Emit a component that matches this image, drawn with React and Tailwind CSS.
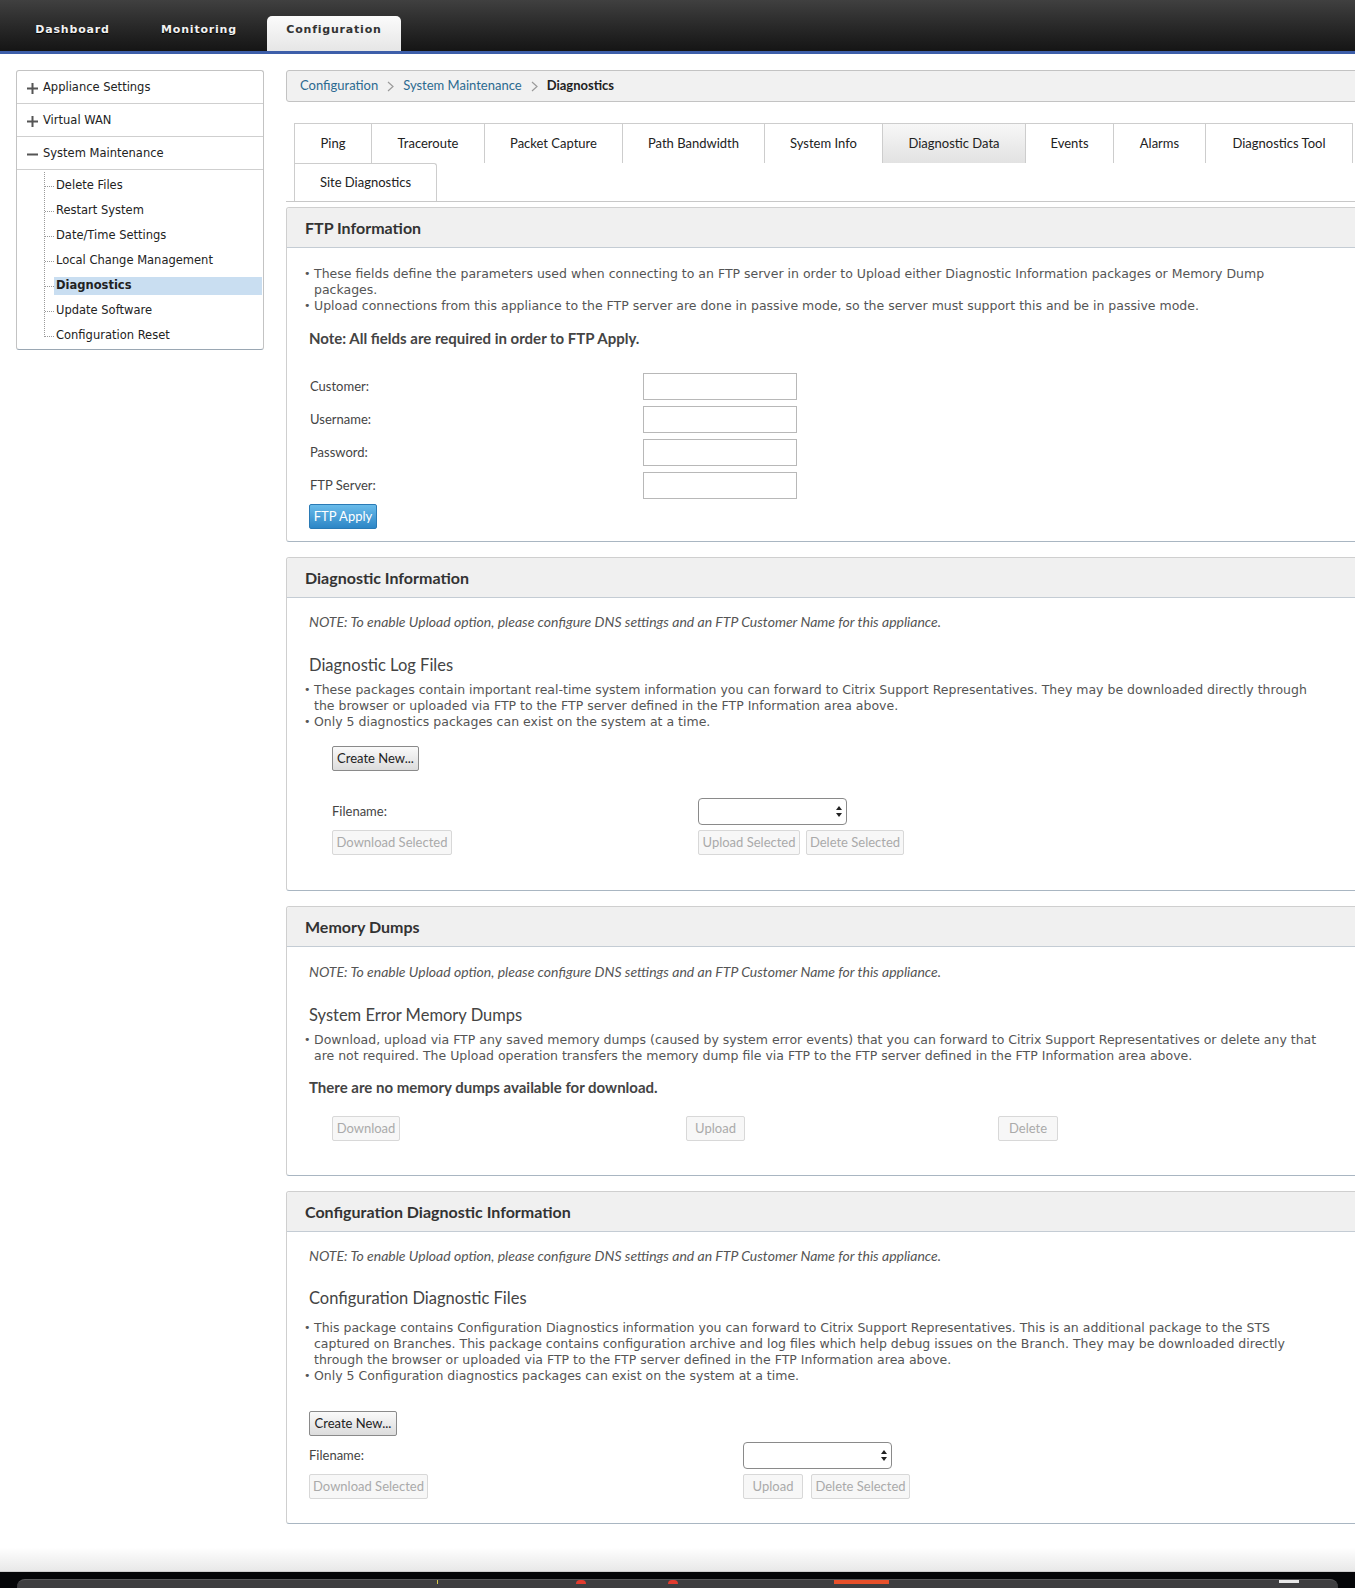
import React from 'react'

const lucida = { fontFamily: '"DejaVu Sans", "Noto Sans", sans-serif' }
const myriad = { fontFamily: 'Lato, "Open Sans", sans-serif' }

const topTabs = ['Dashboard', 'Monitoring']

const tabs = [
  ['Ping', 'w-[77px]'],
  ['Traceroute', 'w-[113px]'],
  ['Packet Capture', 'w-[138px]'],
  ['Path Bandwidth', 'w-[142px]'],
  ['System Info', 'w-[118px]'],
  ['Diagnostic Data', 'w-[143px]', true],
  ['Events', 'w-[88px]'],
  ['Alarms', 'w-[92px]'],
  ['Diagnostics Tool', 'w-[148px]'],
]

const subItems = [
  'Delete Files',
  'Restart System',
  'Date/Time Settings',
  'Local Change Management',
  'Diagnostics',
  'Update Software',
  'Configuration Reset',
]

const NOTE =
  'NOTE: To enable Upload option, please configure DNS settings and an FTP Customer Name for this appliance.'

function Plus({ minus }) {
  return (
    <svg width="11" height="11" viewBox="0 0 11 11" className="mr-[5px]">
      <rect x="0" y="4.5" width="11" height="2" fill="#555" />
      {!minus && <rect x="4.5" y="0" width="2" height="11" fill="#555" />}
    </svg>
  )
}

function Panel({ title, children }) {
  return (
    <div className="rounded-[3px] border border-[#cfcfcf] border-b-[#a9b6c2] bg-white">
      <div
        className="h-[40px] flex items-center pl-[18px] bg-[#f0f0f0] border-b border-[#c4ccd4] text-[16px] font-bold text-[#333] rounded-t-[3px]"
        style={myriad}
      >
        {title}
      </div>
      {children}
    </div>
  )
}

function Bullets({ items, className }) {
  return (
    <ul className={'pl-[17px] pr-[30px] text-[12.5px] leading-[16px] text-[#555] ' + (className || '')} style={lucida}>
      {items.map((t, i) => (
        <li key={i} className="flex">
          <span className="w-[10px] shrink-0 text-[11px]">•</span>
          <span>{t}</span>
        </li>
      ))}
    </ul>
  )
}

function Note({ className }) {
  return (
    <p className={'pl-[22px] text-[14px] leading-[16px] italic text-[#555] ' + (className || '')} style={myriad}>
      {NOTE}
    </p>
  )
}

function SubHead({ children, className }) {
  return (
    <h3 className={'pl-[22px] text-[16.5px] leading-[20px] text-[#444] ' + (className || '')} style={myriad}>
      {children}
    </h3>
  )
}

function Btn({ children, className, disabled }) {
  return (
    <button
      className={
        'h-[25px] px-[4px] rounded-[2px] border text-[13px] leading-none whitespace-nowrap flex items-center justify-center ' +
        (disabled
          ? 'border-[#d8d8d8] bg-[#f7f7f7] text-[#aaa] '
          : 'border-[#8a8a8a] bg-gradient-to-b from-[#fafafa] to-[#dcdcdc] text-[#222] ') +
        (className || '')
      }
      style={myriad}
    >
      {children}
    </button>
  )
}

function Select() {
  return (
    <div className="h-[27px] w-[149px] rounded-[4px] border border-[#8a8a8a] bg-white flex items-center justify-end pr-[4px]">
      <svg width="6" height="11" viewBox="0 0 6 11">
        <path d="M3 0 L6 4 L0 4 Z" fill="#222" />
        <path d="M0 7 L6 7 L3 11 Z" fill="#222" />
      </svg>
    </div>
  )
}

function Input() {
  return <div className="h-[27px] w-[154px] border border-[#b8b8b8] bg-white" />
}

const chevron = (
  <svg width="7" height="11" viewBox="0 0 7 11" className="mx-[9px]">
    <path d="M1 1 L6 5.5 L1 10" fill="none" stroke="#9a9a9a" strokeWidth="1.2" />
  </svg>
)

export default function App() {
  return (
    <div className="w-[1355px] h-[1588px] overflow-hidden bg-white flex flex-col">
      {/* top nav */}
      <div className="h-[54px] shrink-0 bg-gradient-to-b from-[#404040] to-[#151515] border-b-[3px] border-[#3d5ea9] flex items-end pl-[5px]">
        {topTabs.map((t, i) => (
          <div
            key={t}
            className={
              'h-[51px] pt-[10px] flex items-center justify-center text-[11px] font-bold tracking-[0.8px] text-[#f2f2f2] ' +
              (i === 0 ? 'w-[135px]' : 'w-[118px]')
            }
            style={{ ...lucida, textShadow: '0 1px 1px #000' }}
          >
            {t}
          </div>
        ))}
        <div
          className="ml-[9px] h-[35px] w-[134px] rounded-t-[5px] bg-gradient-to-b from-[#fbfbfb] to-[#e6e6e6] flex items-center justify-center pb-[6px] text-[11px] font-bold tracking-[0.8px] text-[#333]"
          style={lucida}
        >
          Configuration
        </div>
      </div>

      <div className="flex pt-[16px]">
        {/* sidebar */}
        <div className="w-[264px] shrink-0 pl-[16px]">
          <div className="w-[248px] rounded-[3px] border border-[#c3c3c3] border-b-[#9aa7b3] text-[11.5px] text-[#222]" style={lucida}>
            {['Appliance Settings', 'Virtual WAN', 'System Maintenance'].map((t, i) => (
              <div key={t} className="h-[33px] pt-[2px] flex items-center pl-[10px] border-b border-[#cfcfcf]">
                <Plus minus={i === 2} />
                {t}
              </div>
            ))}
            <div className="relative pt-[7px] pb-[4px]">
              <div className="absolute left-[27px] top-[2px] h-[165px] border-l border-dotted border-[#9a9a9a]" />
              {subItems.map((t) => (
                <div key={t} className="h-[18px] mb-[7px] last:mb-0 flex items-center">
                  <span className="w-[9px] ml-[28px] border-t border-dotted border-[#9a9a9a]" />
                  <span
                    className={
                      'h-[18px] w-[208px] flex items-center pl-[2px] ' +
                      (t === 'Diagnostics' ? 'bg-[#c9def1] font-bold' : '')
                    }
                  >
                    {t}
                  </span>
                </div>
              ))}
            </div>
          </div>
        </div>

        {/* main */}
        <div className="ml-[22px] w-[1072px] shrink-0">
          <div
            className="h-[32px] rounded-[3px] border border-[#c3c3c3] bg-[#f1f1f1] flex items-center pl-[13px] text-[13px]"
            style={myriad}
          >
            <span className="text-[#2b6a90]">Configuration</span>
            {chevron}
            <span className="text-[#2b6a90]">System Maintenance</span>
            {chevron}
            <span className="font-bold text-[#222]">Diagnostics</span>
          </div>

          {/* tabs */}
          <div className="mt-[21px] border-b border-[#c8c8c8] pl-[8px] text-[13px] text-[#222]" style={myriad}>
            <div className="flex h-[40px]">
              {tabs.map(([t, w, active], i) => (
                <div
                  key={t}
                  className={
                    w +
                    ' shrink-0 flex items-center justify-center border-t border-l border-[#cdcdcd] ' +
                    (i === tabs.length - 1 ? 'border-r ' : '') +
                    (active ? 'bg-gradient-to-b from-[#f7f7f7] to-[#e2e2e2]' : 'bg-white')
                  }
                >
                  {t}
                </div>
              ))}
            </div>
            <div className="flex h-[38px]">
              <div className="w-[143px] flex items-center justify-center border-t border-l border-r border-[#cdcdcd] rounded-tr-[3px]">
                Site Diagnostics
              </div>
            </div>
          </div>

          <div className="mt-[5px] flex flex-col gap-[15px]">
            {/* FTP */}
            <Panel title="FTP Information">
              <Bullets
                className="pt-[18px]"
                items={[
                  'These fields define the parameters used when connecting to an FTP server in order to Upload either Diagnostic Information packages or Memory Dump packages.',
                  'Upload connections from this appliance to the FTP server are done in passive mode, so the server must support this and be in passive mode.',
                ]}
              />
              <p className="pl-[22px] mt-[16px] text-[15px] leading-[16px] font-bold text-[#444]" style={myriad}>
                Note: All fields are required in order to FTP Apply.
              </p>
              <div className="mt-[27px] pl-[23px] flex flex-col gap-[6px] text-[13px] text-[#444]" style={myriad}>
                {['Customer:', 'Username:', 'Password:', 'FTP Server:'].map((l) => (
                  <div key={l} className="flex items-center">
                    <span className="w-[333px]">{l}</span>
                    <Input />
                  </div>
                ))}
              </div>
              <div className="pl-[22px] mt-[5px] pb-[12px] flex">
                <button
                  className="h-[25px] w-[68px] rounded-[2px] border border-[#2a7ab5] bg-gradient-to-b from-[#68bbea] to-[#2c86c6] text-white text-[13px] whitespace-nowrap"
                  style={myriad}
                >
                  FTP Apply
                </button>
              </div>
            </Panel>

            {/* Diagnostic Information */}
            <Panel title="Diagnostic Information">
              <Note className="pt-[16px]" />
              <SubHead className="mt-[25px]">Diagnostic Log Files</SubHead>
              <Bullets
                className="mt-[7px]"
                items={[
                  'These packages contain important real-time system information you can forward to Citrix Support Representatives. They may be downloaded directly through the browser or uploaded via FTP to the FTP server defined in the FTP Information area above.',
                  'Only 5 diagnostics packages can exist on the system at a time.',
                ]}
              />
              <div className="pl-[45px] mt-[16px] flex">
                <Btn className="w-[87px]">Create New...</Btn>
              </div>
              <div className="pl-[45px] mt-[27px] flex items-center text-[13px] text-[#444]" style={myriad}>
                <span className="w-[366px]">Filename:</span>
                <Select />
              </div>
              <div className="pl-[45px] mt-[5px] pb-[35px] flex">
                <Btn disabled className="w-[120px]">Download Selected</Btn>
                <Btn disabled className="ml-[246px] w-[102px]">Upload Selected</Btn>
                <Btn disabled className="ml-[6px] w-[98px]">Delete Selected</Btn>
              </div>
            </Panel>

            {/* Memory Dumps */}
            <Panel title="Memory Dumps">
              <Note className="pt-[17px]" />
              <SubHead className="mt-[25px]">System Error Memory Dumps</SubHead>
              <Bullets
                className="mt-[7px]"
                items={[
                  'Download, upload via FTP any saved memory dumps (caused by system error events) that you can forward to Citrix Support Representatives or delete any that are not required. The Upload operation transfers the memory dump file via FTP to the FTP server defined in the FTP Information area above.',
                ]}
              />
              <p className="pl-[22px] mt-[15px] text-[15px] leading-[16px] font-bold text-[#444]" style={myriad}>
                There are no memory dumps available for download.
              </p>
              <div className="pl-[45px] mt-[21px] pb-[34px] flex">
                <Btn disabled className="w-[68px]">Download</Btn>
                <Btn disabled className="ml-[286px] w-[59px]">Upload</Btn>
                <Btn disabled className="ml-[253px] w-[60px]">Delete</Btn>
              </div>
            </Panel>

            {/* Configuration Diagnostic Information */}
            <Panel title="Configuration Diagnostic Information">
              <Note className="pt-[16px]" />
              <SubHead className="mt-[24px]">Configuration Diagnostic Files</SubHead>
              <Bullets
                className="mt-[12px]"
                items={[
                  'This package contains Configuration Diagnostics information you can forward to Citrix Support Representatives. This is an additional package to the STS captured on Branches. This package contains configuration archive and log files which help debug issues on the Branch. They may be downloaded directly through the browser or uploaded via FTP to the FTP server defined in the FTP Information area above.',
                  'Only 5 Configuration diagnostics packages can exist on the system at a time.',
                ]}
              />
              <div className="pl-[22px] mt-[27px] flex">
                <Btn className="w-[88px]">Create New...</Btn>
              </div>
              <div className="pl-[22px] mt-[6px] flex items-center text-[13px] text-[#444]" style={myriad}>
                <span className="w-[434px]">Filename:</span>
                <Select />
              </div>
              <div className="pl-[22px] mt-[5px] pb-[24px] flex">
                <Btn disabled className="w-[119px]">Download Selected</Btn>
                <Btn disabled className="ml-[315px] w-[60px]">Upload</Btn>
                <Btn disabled className="ml-[8px] w-[99px]">Delete Selected</Btn>
              </div>
            </Panel>
          </div>
        </div>
      </div>

      {/* bottom fade */}
      <div className="flex-1 bg-gradient-to-b from-white via-white to-[#e8e8e8] border-b border-[#cfcfcf]" />
      <div className="h-[16px] shrink-0 bg-[#050608] pt-[7px] px-[17px]">
        <div className="h-[9px] rounded-t-[8px] bg-[#3f3f41] border-t border-[#5a5a5c] flex items-start">
          <div className="ml-[420px] w-[1px] h-[4px] bg-[#d6c64a]" />
          <div className="ml-[138px] w-[10px] h-[4px] rounded-t-full bg-[#e23b2e]" />
          <div className="ml-[82px] w-[10px] h-[4px] rounded-t-full bg-[#e23b2e]" />
          <div className="ml-[156px] w-[55px] h-[4px] bg-[#e8502a]" />
          <div className="ml-[390px] w-[20px] h-[3px] bg-[#e8e8e8]" />
        </div>
      </div>
    </div>
  )
}
